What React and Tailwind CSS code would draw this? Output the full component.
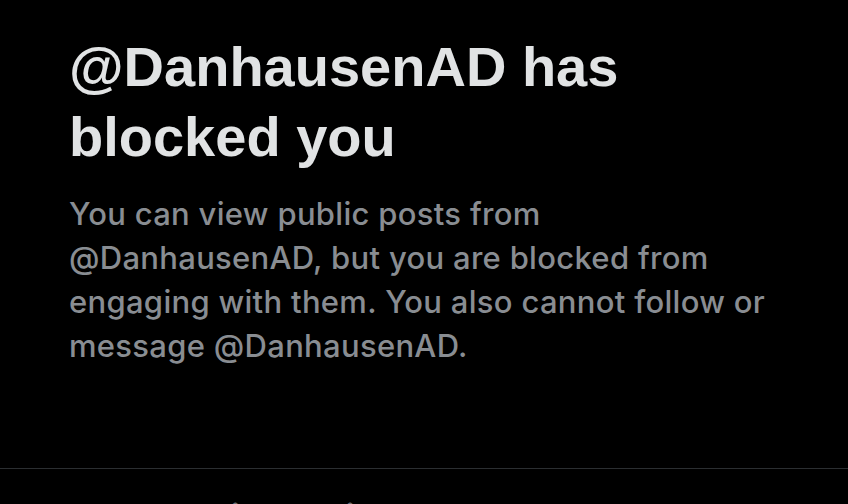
export default function App() {
  return (
    <div className="h-[504px] w-[848px] overflow-hidden bg-black font-['Inter',sans-serif]">
      <div className="pl-[69px] pr-6 pt-[32px]">
        <h1 className="font-['Liberation_Sans',Arial,sans-serif] text-[56px] font-bold leading-[70px] text-[#e1e3e4]">
          @DanhausenAD has
          <br />
          blocked you
        </h1>
        <p className="mt-[20px] text-[31px] font-medium leading-[44px] tracking-[0.3px] text-[#898d92]">
          You can view public posts from
          <br />
          @DanhausenAD, but you are blocked from
          <br />
          engaging with them. You also cannot follow or
          <br />
          message @DanhausenAD.
        </p>
      </div>
      <div className="mt-[100px] border-t border-[#2b2e31] pl-[78px] pt-[26px]">
        <div className="text-[30px] font-bold leading-[40px] text-[#6b6f73]">
          Posts Replies Media
        </div>
      </div>
    </div>
  );
}
